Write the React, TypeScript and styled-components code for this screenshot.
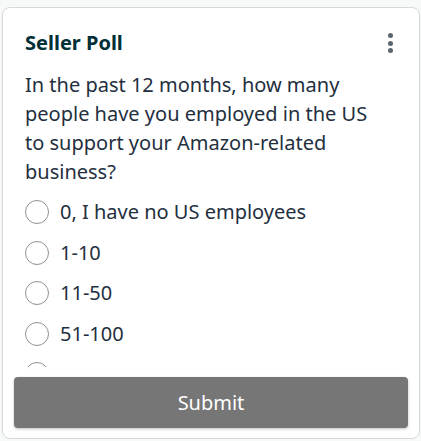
import React from "react";
import styled, { createGlobalStyle } from "styled-components";

const Global = createGlobalStyle`
  html, body { margin: 0; padding: 0; background: #f7f8f8; }
  body { font-family: "Noto Sans", "Open Sans", sans-serif; color: #232f3e; }
  * { box-sizing: border-box; }
`;

const Page = styled.div`
  padding: 7px 1px 2px 2px;
`;

const Card = styled.div`
  background: #fff;
  border: 1px solid #d5d9d9;
  border-radius: 8px;
  height: 432px;
  display: flex;
  flex-direction: column;
  padding: 0 11px 10px 11px;
`;

const Header = styled.div`
  display: flex;
  align-items: center;
  justify-content: space-between;
  padding: 22px 14px 0 11px;
`;

const Title = styled.h2`
  margin: 0;
  font-size: 20px;
  font-weight: 700;
  color: #002f36;
  line-height: 26px;
`;

const Kebab = styled.button`
  border: none;
  background: none;
  padding: 0;
  width: 8px;
  display: flex;
  flex-direction: column;
  align-items: center;
  gap: 2.5px;
  cursor: pointer;
`;

const Dot = styled.span`
  width: 5px;
  height: 5px;
  border-radius: 50%;
  background: #5b6570;
`;

const Question = styled.p`
  margin: 14px 0 0 11px;
  max-width: 360px;
  font-size: 20px;
  line-height: 29px;
  color: #232f3e;
`;

const Options = styled.div`
  margin: 14px 0 2px 11px;
  flex: 1;
  min-height: 0;
  overflow-y: auto;
  display: flex;
  flex-direction: column;
  gap: 16.5px;
  &::-webkit-scrollbar { display: none; }
`;

const Option = styled.label`
  display: flex;
  align-items: center;
  gap: 11px;
  font-size: 20px;
  line-height: 24px;
  color: #232f3e;
  flex-shrink: 0;
  cursor: pointer;
`;

const Radio = styled.span`
  width: 24px;
  height: 24px;
  border-radius: 50%;
  border: 1px solid #8d9096;
  background: #fff;
  flex-shrink: 0;
`;

const Submit = styled.button`
  margin-top: 8px;
  height: 51px;
  width: 100%;
  flex-shrink: 0;
  border: none;
  border-radius: 4px;
  background: #767676;
  color: #fff;
  font-family: inherit;
  font-size: 20px;
  box-shadow: 0 1px 3px rgba(0, 0, 0, 0.25);
  cursor: pointer;
`;

const options = ["0, I have no US employees", "1-10", "11-50", "51-100", "101-500", "More than 500"];

export default function App() {
  return (
    <>
      <Global />
      <Page>
        <Card>
          <Header>
            <Title>Seller Poll</Title>
            <Kebab aria-label="More options">
              <Dot />
              <Dot />
              <Dot />
            </Kebab>
          </Header>
          <Question>
            In the past 12 months, how many people have you employed in the US to support your Amazon-related business?
          </Question>
          <Options>
            {options.map((o) => (
              <Option key={o}>
                <Radio />
                {o}
              </Option>
            ))}
          </Options>
          <Submit>Submit</Submit>
        </Card>
      </Page>
    </>
  );
}
